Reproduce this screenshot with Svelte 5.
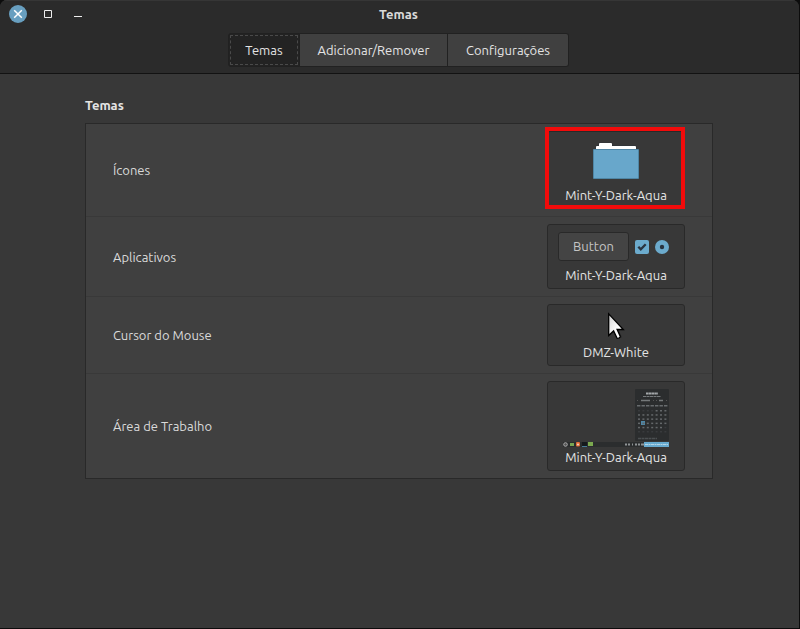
<script>
  const tabs = ['Temas', 'Adicionar/Remover', 'Configurações'];
  let active = $state('Temas');

  const rows = [
    { id: 'icons', label: 'Ícones', value: 'Mint-Y-Dark-Aqua' },
    { id: 'apps', label: 'Aplicativos', value: 'Mint-Y-Dark-Aqua' },
    { id: 'cursor', label: 'Cursor do Mouse', value: 'DMZ-White' },
    { id: 'desktop', label: 'Área de Trabalho', value: 'Mint-Y-Dark-Aqua' }
  ];

  const weeks = [0, 1, 2, 3, 4, 5];
  const days = [0, 1, 2, 3, 4, 5, 6];
  const dim = (w, d) => (w === 0 && d < 4) || w === 5 || (w === 4 && d > 5);
</script>

<div class="window">
  <header>
    <div class="titlebar">
      <div class="controls">
        <button class="close" aria-label="Fechar">
          <svg width="18" height="18" viewBox="0 0 18 18"><path d="M5.2 5.2l7.6 7.6M12.8 5.2l-7.6 7.6" stroke="#fff" stroke-width="1.5" /></svg>
        </button>
        <button aria-label="Maximizar">
          <svg width="18" height="18" viewBox="0 0 18 18"><path d="M5.5 5.5h7v7h-7z" fill="none" stroke="#eee" /></svg>
        </button>
        <button aria-label="Minimizar">
          <svg width="18" height="18" viewBox="0 0 18 18"><path d="M5 11h8v1H5z" fill="#eee" /></svg>
        </button>
      </div>
      <h1>Temas</h1>
      <div></div>
    </div>
    <nav>
      {#each tabs as tab, i}
        <button class="tab t{i}" class:active={active === tab} onclick={() => (active = tab)}>{tab}</button>
      {/each}
    </nav>
  </header>

  <main>
    <h2>Temas</h2>
    <div class="panel">
      {#each rows as row}
        <div class="row">
          <span id="label-{row.id}">{row.label}</span>
          <div class="slot">
            <button class="card" aria-labelledby="label-{row.id} value-{row.id}">
              {#if row.id === 'icons'}
                <svg width="48" height="48" viewBox="0 0 48 48">
                  <path d="M3.500 11V8L5 7h1.500V5L7.500 4.500H19.500L20.500 5.500V7H43.500L44.500 8V11z" fill="#2e3338" opacity=".6" />
                  <path d="M4 11V8.500L5 8h2V5.500L8 5h11l1 .5V8h23l1 .5V11z" fill="#fff" />
                  <rect x="1" y="11" width="46" height="30" rx="1" fill="#4f86a5" />
                  <rect x="2" y="12" width="44" height="28" fill="#68a7cb" />
                </svg>
              {:else if row.id === 'apps'}
                <span class="widgets">
                  <span class="sample">Button</span>
                  <svg width="14" height="14" viewBox="0 0 14 14"><rect width="14" height="14" rx="2" fill="#6cabcd" /><path d="M3.300 6.700l2.500 2.600 4.900-5" fill="none" stroke="#293440" stroke-width="2.300" /></svg>
                  <svg width="14" height="14" viewBox="0 0 14 14"><circle cx="7" cy="7" r="7" fill="#6cabcd" /><circle cx="7" cy="7" r="2.200" fill="#293440" /></svg>
                </span>
              {:else if row.id === 'cursor'}
                <svg width="32" height="32" viewBox="0 0 32 32">
                  <defs><linearGradient id="arrow" x2="1" y2="1"><stop offset="0" stop-color="#d2d2d2" /><stop offset=".6" stop-color="#fff" /></linearGradient></defs>
                  <path d="M9.500 4v21l5-4.500 3.500 7.500 4-1.800-3.300-7h6z" fill="#000" opacity=".25" />
                  <path d="M8.700 2.800v21.600l4.900-4.500 3.300 7c.5 1 3.800-.3 3.400-1.500l-3.200-6.900h6.200z" fill="url(#arrow)" stroke="#000" stroke-width="1.300" />
                </svg>
              {:else}
                <svg width="106" height="60" viewBox="0 0 106 60">
                  <rect x="72" y="1" width="34" height="52" rx="1" fill="#2b2d2e" />
                  <path d="M83 5.500h12" stroke="#a4a8aa" stroke-width="2" stroke-dasharray="2.500 .3" />
                  <path d="M80 8.500h18" stroke="#777b7d" stroke-dasharray="3 .5" />
                  <path d="M78 12.500h9M96 12.500h4" stroke="#747879" stroke-width="1.500" />
                  <path d="M74 12.500h1M90 12.500h1M93 12.500h1M103 12.500h1" stroke="#555" />
                  {#each days as d}
                    <rect x={74 + d * 4.500} y="17" width="3.400" height="1.500" fill="#686c6e" />
                  {/each}
                  {#each weeks as w}
                    {#each days as d}
                      {#if w === 3 && d === 1}
                        <rect x="78" y="33" width="4" height="4" fill="#4e87a6" />
                      {/if}
                      <rect x={75 + d * 4.400} y={22 + w * 4.200} width="2" height="1.500" fill={dim(w, d) ? '#393b3d' : '#64686a'} />
                    {/each}
                  {/each}
                  <path d="M75 50.500h19" stroke="#4b4f51" stroke-width="1.500" stroke-dasharray="3 .5" />
                  <rect y="54" width="106" height="5" fill="#2b2d2e" />
                  <circle cx="2.500" cy="56.500" r="1.800" fill="#555" stroke="#aaa" />
                  <rect x="7" y="55" width="4" height="3" fill="#79a552" />
                  <rect x="13" y="54" width="4" height="4.500" rx="1" fill="#e06a35" />
                  <circle cx="15" cy="56.500" r="1" fill="#f1d6c8" />
                  <rect x="19" y="54" width="5" height="4" fill="#15191c" />
                  <path d="M19 58.500h5" stroke="#467b98" />
                  <rect x="25" y="54" width="5" height="4" fill="#7ba94f" />
                  <path d="M62 56.500h2M65 56.500h2M69 56.500h1M72 56.500h2M75 56.500h2M78 56.500h3" stroke="#8f9395" stroke-width="2" />
                  <rect x="81" y="54" width="25" height="5" fill="#68abd0" />
                  <path d="M82 56.500h23" stroke="#b4d6e7" stroke-dasharray="3 .5 2 .5" />
                </svg>
              {/if}
              <span id="value-{row.id}" class="value">{row.value}</span>
            </button>
            {#if row.id === 'icons'}<span class="highlight"></span>{/if}
          </div>
        </div>
      {/each}
    </div>
  </main>
</div>

<style>
  :global(body) {
    background: #0c0c0c;
  }

  .window {
    box-sizing: border-box;
    min-height: calc(100vh - 1px);
    margin-right: 1px;
    background: #383838;
    border-radius: 7px 7px 0 0;
    overflow: hidden;
    color: #dadada;
    font: 13px/18px Ubuntu, 'Noto Sans', sans-serif;
  }

  button {
    margin: 0;
    padding: 0;
    border: 0;
    background: none;
    color: #e4e4e4;
    font: inherit;
  }

  svg {
    display: block;
  }

  header {
    background: #2b2b2b;
    border-top: 1px solid #363636;
    border-bottom: 1px solid #121212;
    padding: 0 2px 6px 0;
  }

  .titlebar {
    display: grid;
    grid-template-columns: 1fr auto 1fr;
    align-items: center;
    height: 26px;
    margin-bottom: 6px;
  }

  .controls {
    display: flex;
    gap: 12px;
    padding-left: 9px;
  }

  .close {
    border-radius: 50%;
    background: #689fc0;
  }

  h1,
  h2 {
    margin: 0;
    font-size: 13px;
    line-height: 18px;
  }

  h1 {
    font-weight: 600;
  }

  nav {
    display: flex;
    justify-content: center;
  }

  .tab {
    box-sizing: border-box;
    height: 34px;
    padding: 0 15px;
    border: 1px solid #212121;
    border-left-width: 0;
    background: #404040;
  }

  .tab:first-child {
    border-left-width: 1px;
    border-radius: 3px 0 0 3px;
  }

  .tab:last-child {
    border-radius: 0 3px 3px 0;
  }

  .tab.active {
    background: #232323;
    outline: 1px dashed #4a4a4a;
    outline-offset: -3px;
  }

  .t0 {
    width: 72px;
  }

  .t1 {
    width: 148px;
  }

  .t2 {
    width: 121px;
  }

  main {
    padding: 22px 86px 22px 85px;
  }

  h2 {
    margin-bottom: 9px;
    font-weight: 700;
    color: #e4e4e4;
  }

  .panel {
    border: 1px solid #292929;
    background: #404040;
  }

  .row {
    display: flex;
    align-items: center;
    justify-content: space-between;
    padding: 7px 27px;
  }

  .row + .row {
    border-top: 1px solid #393939;
  }

  .slot {
    position: relative;
    width: 138px;
  }

  .card {
    box-sizing: border-box;
    display: flex;
    flex-direction: column;
    align-items: center;
    width: 100%;
    padding: 6px 0 4px;
    border: 1px solid #292929;
    border-radius: 3px;
    background: #383838;
  }

  .value {
    white-space: nowrap;
  }

  .highlight {
    position: absolute;
    inset: -4px 0 0 -2px;
    border: 4px solid #f20b0b;
    pointer-events: none;
  }

  .widgets {
    display: flex;
    align-items: center;
    gap: 6px;
    height: 35px;
    padding-right: 5px;
    box-sizing: border-box;
    padding-bottom: 4px;
  }

  .sample {
    box-sizing: border-box;
    width: 71px;
    height: 29px;
    border: 1px solid #292929;
    border-radius: 3px;
    background: #444;
    line-height: 27px;
    text-align: center;
    color: #c4c4c4;
  }
</style>
